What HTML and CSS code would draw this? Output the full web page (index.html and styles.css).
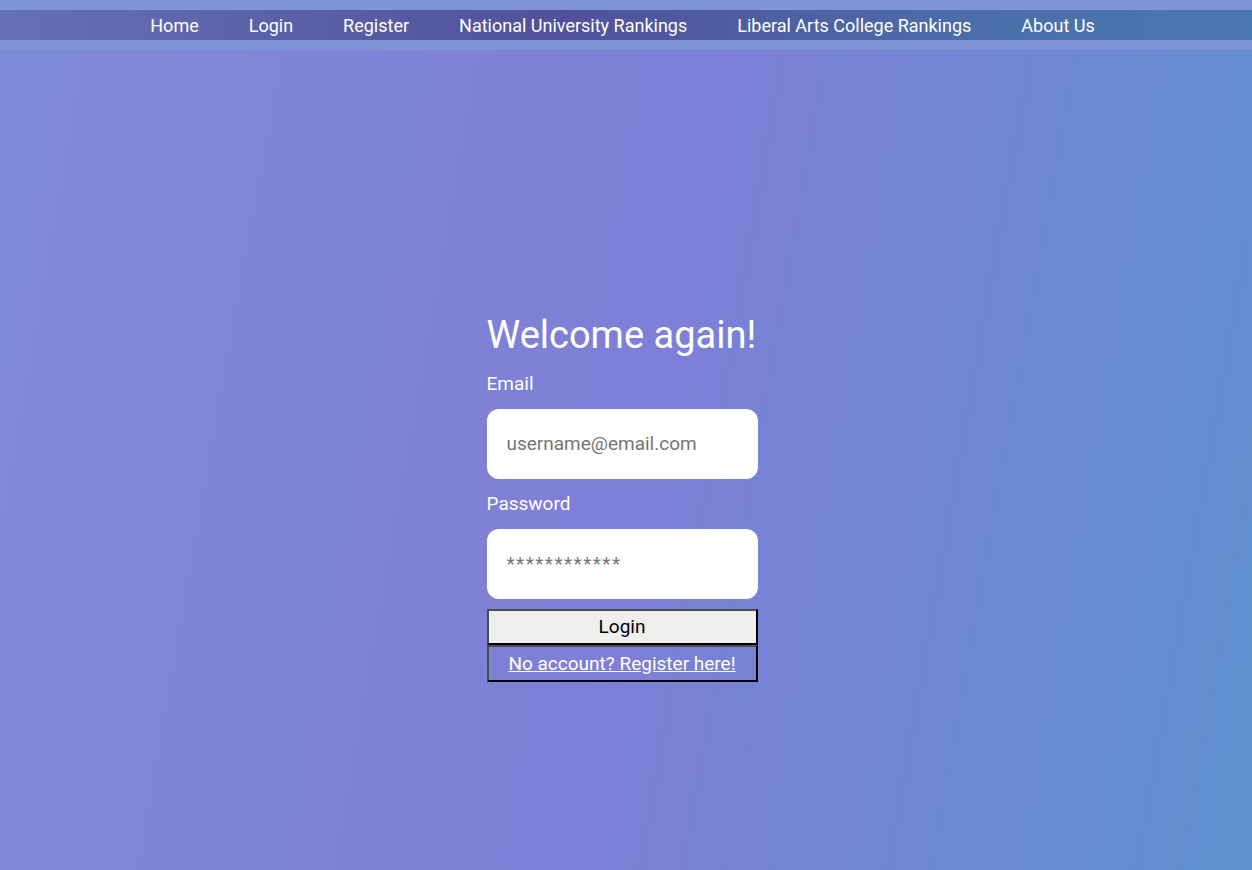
FILE: index.html
```html
<!DOCTYPE html>
<html lang="en">
<head>
<meta charset="utf-8">
<title>Login</title>
<link rel="stylesheet" href="styles.css">
</head>
<body>
<header class="header">
  <nav class="nav">
    <a class="nav-link" href="#">Home</a>
    <a class="nav-link" href="#">Login</a>
    <a class="nav-link" href="#">Register</a>
    <a class="nav-link" href="#">National University Rankings</a>
    <a class="nav-link" href="#">Liberal Arts College Rankings</a>
    <a class="nav-link" href="#">About Us</a>
  </nav>
</header>
<main class="main">
  <form class="form">
    <h1 class="title">Welcome again!</h1>
    <label class="label" for="email">Email</label>
    <input class="input" id="email" type="text" placeholder="username@email.com">
    <label class="label" for="pw">Password</label>
    <input class="input input-pw" id="pw" type="text" placeholder="************">
    <button class="btn btn-login" type="button">Login</button>
    <button class="btn btn-register" type="button"><a href="#" class="reg-link">No account? Register here!</a></button>
  </form>
</main>
</body>
</html>
```
FILE: styles.css
```css
html, body {
  margin: 0;
  padding: 0;
  height: 100%;
}
body {
  font-family: Roboto, "Liberation Sans", sans-serif;
  background: linear-gradient(100deg, #7f8bd8 0%, #7e7fd6 50%, #5f90d0 100%);
  color: #fff;
  min-height: 870px;
  display: flex;
  flex-direction: column;
}
.header {
  background: #7e93d8;
  padding: 10px 0;
}
.nav {
  height: 30px;
  display: flex;
  justify-content: center;
  align-items: center;
  background: linear-gradient(to right, #6670b6 0%, #50519a 45%, #4b6fab 80%, #4a78b0 100%);
  padding-right: 7px;
}
.nav-link {
  color: #fff;
  text-decoration: none;
  font-size: 18px;
  padding: 0 25px;
}
.main {
  flex: 1;
  display: flex;
  justify-content: center;
  align-items: center;
  padding-top: 74px;
  padding-right: 8px;
}
.form {
  width: 271px;
  display: flex;
  flex-direction: column;
}
.title {
  font-size: 38px;
  font-weight: 400;
  margin: 0 0 16px;
  line-height: 44px;
  white-space: nowrap;
}
.label {
  font-size: 19px;
  line-height: 22px;
  margin-bottom: 14px;
}
.input {
  box-sizing: border-box;
  height: 70px;
  border: none;
  border-radius: 12px;
  padding: 0 20px;
  font-family: Roboto, "Liberation Sans", sans-serif;
  font-size: 19px;
  margin-bottom: 14px;
  outline: none;
}
.input::placeholder {
  color: #757575;
}
.input-pw {
  margin-bottom: 10px;
  letter-spacing: 1.4px;
}
.btn {
  box-sizing: border-box;
  height: 36px;
  border: 2px solid;
  border-color: #4d4d4d #000 #000 #4d4d4d;
  font-family: Roboto, "Liberation Sans", sans-serif;
  font-size: 19px;
  padding: 0;
  margin: 0;
}
.btn-login {
  background: #efefef;
  color: #000;
}
.btn-register {
  background: transparent;
  height: 37px;
}
.reg-link {
  color: #fff;
  text-decoration: underline;
}
```
